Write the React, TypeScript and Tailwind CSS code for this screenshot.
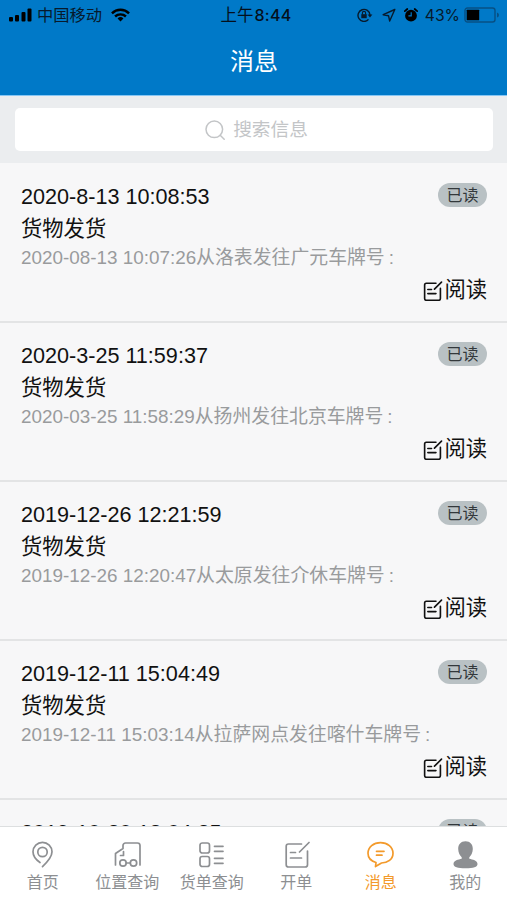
import React, { useState } from 'react';

const messages = [
  { id: 1, time: '2020-8-13 10:08:53', detail: '2020-08-13 10:07:26从洛表发往广元车牌号' },
  { id: 2, time: '2020-3-25 11:59:37', detail: '2020-03-25 11:58:29从扬州发往北京车牌号' },
  { id: 3, time: '2019-12-26 12:21:59', detail: '2019-12-26 12:20:47从太原发往介休车牌号' },
  { id: 4, time: '2019-12-11 15:04:49', detail: '2019-12-11 15:03:14从拉萨网点发往喀什车牌号' },
  { id: 5, time: '2019-10-20 18:04:25', detail: '2019-10-20 18:03:11从太原发往北京车牌号' },
];

function NoteIcon({ className, strokeWidth = 1.5 }: { className?: string; strokeWidth?: number }) {
  return (
    <svg viewBox="0 0 25 27" fill="none" stroke="currentColor" strokeWidth={strokeWidth} strokeLinecap="round" className={className}>
      <path d="M16.500 3H3.500A2.300 2.300 0 0 0 1.200 5.300v18.400A2.300 2.300 0 0 0 3.500 26h16.700a2.300 2.300 0 0 0 2.300-2.300V10" />
      <path d="M24 1.500 14.500 11M5.500 11.500h5M5.500 17h11" />
    </svg>
  );
}

function StatusBar() {
  return (
    <div className="flex h-[30px] items-center justify-between pr-[7px] pl-[9px] text-[16px] text-[#071a2c]">
      <div className="flex w-[150px] items-center">
        <svg viewBox="0 0 23 14" className="h-[14px] w-[23px]" fill="#000">
          <rect x="0" y="9" width="4" height="4.500" rx="1" />
          <rect x="6" y="7" width="4" height="6.500" rx="1" />
          <rect x="12.500" y="4" width="4" height="9.500" rx="1" />
          <rect x="18.500" y="0.500" width="4" height="13" rx="1" />
        </svg>
        <span className="ml-[5px] text-[16.3px]">中国移动</span>
        <svg viewBox="0 0 20 14" className="ml-[9px] h-[14px] w-[19px]" fill="none" stroke="#000" strokeWidth="2.600">
          <path d="M1 5.200a13 13 0 0 1 18 0M4.300 8.600a8.300 8.300 0 0 1 11.400 0" />
          <path d="M10 13.800 6.900 10.700a4.500 4.500 0 0 1 6.200 0z" fill="#000" stroke="none" />
        </svg>
      </div>
      <div className="flex items-center pl-[3px] whitespace-nowrap text-[#04101c]">
        <span className="text-[16.500px]">上午</span>
        <span className="ml-[1px] font-['Inter',sans-serif] text-[16px] font-medium tracking-[0.3px]">8:44</span>
      </div>
      <div className="flex w-[150px] items-center justify-end whitespace-nowrap">
        <svg viewBox="0 0 16 14" className="h-[14px] w-[16px] shrink-0" fill="none" stroke="currentColor" strokeWidth="1.400">
          <path d="M11.500 11.400A6 6 0 1 1 13 7" />
          <path d="M10.600 6.500h4.800L13 9.600z" fill="currentColor" stroke="none" />
          <rect x="4.300" y="6.200" width="5.400" height="4" fill="currentColor" stroke="none" />
          <path d="M5.400 6.500V5a1.600 1.600 0 0 1 3.200 0v1.500" strokeWidth="1.100" />
        </svg>
        <svg viewBox="0 0 14 14" className="ml-[9px] h-[14px] w-[14px] shrink-0" fill="none" stroke="currentColor" strokeWidth="1.400" strokeLinejoin="round">
          <path d="M12.800 1.500 1.200 6.700l5.300 1 1.200 5.300z" />
        </svg>
        <svg viewBox="0 0 14 14" className="ml-[8px] h-[14px] w-[14px] shrink-0">
          <circle cx="7" cy="7.700" r="5.900" fill="#000" />
          <path d="M.8 3.200 3.300 1M13.200 3.200 10.700 1" stroke="#000" strokeWidth="1.700" strokeLinecap="round" />
          <path d="M7.200 4.200v3.700H4.400" fill="none" stroke="#0079c8" strokeWidth="1.200" />
        </svg>
        <span className="ml-[7px] pt-[1px] font-['Inter',sans-serif] text-[15.700px]">43%</span>
        <svg viewBox="0 0 36 16" className="ml-[4px] h-[16px] w-[36px] shrink-0">
          <rect x="1" y="1" width="30" height="14" rx="2.500" fill="none" stroke="#075084" strokeWidth="1.400" />
          <rect x="2.700" y="2.800" width="12.500" height="10.400" rx="0.500" fill="#000" />
          <path d="M33 5.500q2 .5 2 2.500t-2 2.500z" fill="#075084" />
        </svg>
      </div>
    </div>
  );
}

const tabs = [
  {
    label: '首页',
    icon: (
      <>
        <path d="M12 22.500C6 18.500 5 14.500 5 11.800a9.500 9.500 0 1 1 19 0c0 5-3.300 9-9.500 14.800" />
        <circle cx="14.500" cy="12" r="4.700" />
      </>
    ),
  },
  {
    label: '位置查询',
    icon: (
      <>
        <path d="M2.500 25V13.500l7.500-5V5.500A2.500 2.500 0 0 1 12.500 3h12A2.500 2.500 0 0 1 27 5.500V25M10.500 11.500v4H7.500" />
        <circle cx="10" cy="23" r="3.200" />
        <circle cx="20.500" cy="23" r="3.200" />
        <path d="M13.200 23h4.100" />
      </>
    ),
  },
  {
    label: '货单查询',
    icon: (
      <>
        <rect x="3" y="3" width="9.500" height="10" rx="2.300" />
        <rect x="3" y="16.500" width="9.500" height="10" rx="2.300" />
        <path d="M17.500 6.300h8.500M17.500 11.300h8.500M17.500 18.300h8.500M17.500 23.300h8.500" />
      </>
    ),
  },
  { label: '开单', icon: null },
  {
    label: '消息',
    icon: (
      <>
        <path d="M9.500 26.500 10 22.500C4.700 21 2 17.500 2 13.300 2 7.200 7.500 2.700 14.500 2.700S27 7.200 27 13.300 21.500 23 15.500 23c-2 1-4 2.500-6 3.500z" />
        <path d="M10.500 11.300h7.500M10.500 15.200h5.500" />
      </>
    ),
  },
  {
    label: '我的',
    icon: (
      <path
        fill="currentColor"
        stroke="none"
        d="M14.500 1.300c4.700 0 7.300 3.200 7.300 7.700 0 3.500-1.800 6.800-3.500 8.300v1.400c3.300.8 8.200 1.700 8.200 5.300 0 3.200-4 4.300-12 4.300s-12-1.100-12-4.300c0-3.600 4.900-4.500 8.200-5.300v-1.400C9 15.800 7.200 12.500 7.200 9c0-4.500 2.600-7.700 7.300-7.700z"
      />
    ),
  },
];

export default function App() {
  const [active, setActive] = useState('消息');

  return (
    <div className="flex h-[900px] w-[507px] flex-col overflow-hidden bg-[#f7f7f8] font-['Liberation_Sans','Noto_Sans_CJK_SC',sans-serif]">
      <header className="h-[96px] shrink-0 border-b border-[#86c6f4] bg-[#0079c8]">
        <StatusBar />
        <h1 className="pt-[14px] pl-[1px] text-center text-[24px] leading-[36px] text-white">消息</h1>
      </header>

      <div className="h-[67px] shrink-0 bg-[#ebedef] px-[14.500px] pt-[11.500px]">
        <label className="flex h-[43px] items-center justify-center rounded-[5px] bg-white pt-[2px] pl-[6px] text-[18.700px] text-[#c3c5c7]">
          <svg viewBox="0 0 20 20" className="mr-[8px] h-[20px] w-[20px]" fill="none" stroke="currentColor" strokeWidth="1.500">
            <circle cx="9.300" cy="9.300" r="8.300" />
            <path d="M15.200 15.200l4 4" strokeLinecap="round" />
          </svg>
          <span>搜索信息</span>
        </label>
      </div>

      <main className="min-h-0 flex-1 overflow-hidden pt-[1px]">
        {messages.map((msg) => (
          <article key={msg.id} className="h-[159px] border-b-2 border-[#e3e4e5] pt-[15px] pr-[20px] pl-[21px] text-[21.300px] text-[#111]">
            <div className="flex h-[34px] items-start justify-between">
              <time className="pt-[1px] text-[21.600px] leading-[34px] whitespace-nowrap">{msg.time}</time>
              <span className="mt-[4px] flex h-[24px] w-[49px] items-center justify-center rounded-full bg-[#b9c1c4] pt-[1px] text-[16px] text-[#33383b]">已读</span>
            </div>
            <h2 className="h-[32px] leading-[32px]">货物发货</h2>
            <p className="h-[28px] text-[18.880px] leading-[26px] whitespace-nowrap text-[#999b9d]">
              {msg.detail}
              <span className="ml-[4px]">:</span>
            </p>
            <button className="ml-auto flex h-[36px] items-center">
              <NoteIcon className="mr-[1px] h-[20px] w-[20px]" strokeWidth={2.2} />
              阅读
            </button>
          </article>
        ))}
      </main>

      <nav className="grid h-[74px] shrink-0 grid-cols-6 border-t border-[#dddfe0] bg-white">
        {tabs.map((tab) => (
          <button
            key={tab.label}
            onClick={() => setActive(tab.label)}
            className={`flex flex-col items-center pt-[13px] pl-[1px] text-[16px] leading-[28px] whitespace-nowrap ${tab.label === active ? 'text-[#f39a2b]' : 'text-[#8d8f92]'}`}
          >
            {tab.icon ? (
              <svg viewBox="0 0 29 29" className="h-[29px] w-[29px] shrink-0" fill="none" stroke="currentColor" strokeWidth="1.700" strokeLinecap="round" strokeLinejoin="round">
                {tab.icon}
              </svg>
            ) : (
              <NoteIcon className="mt-[1px] mb-[1px] ml-[2px] h-[27px] w-[25px] shrink-0" strokeWidth={1.7} />
            )}
            <span>{tab.label}</span>
          </button>
        ))}
      </nav>
    </div>
  );
}
